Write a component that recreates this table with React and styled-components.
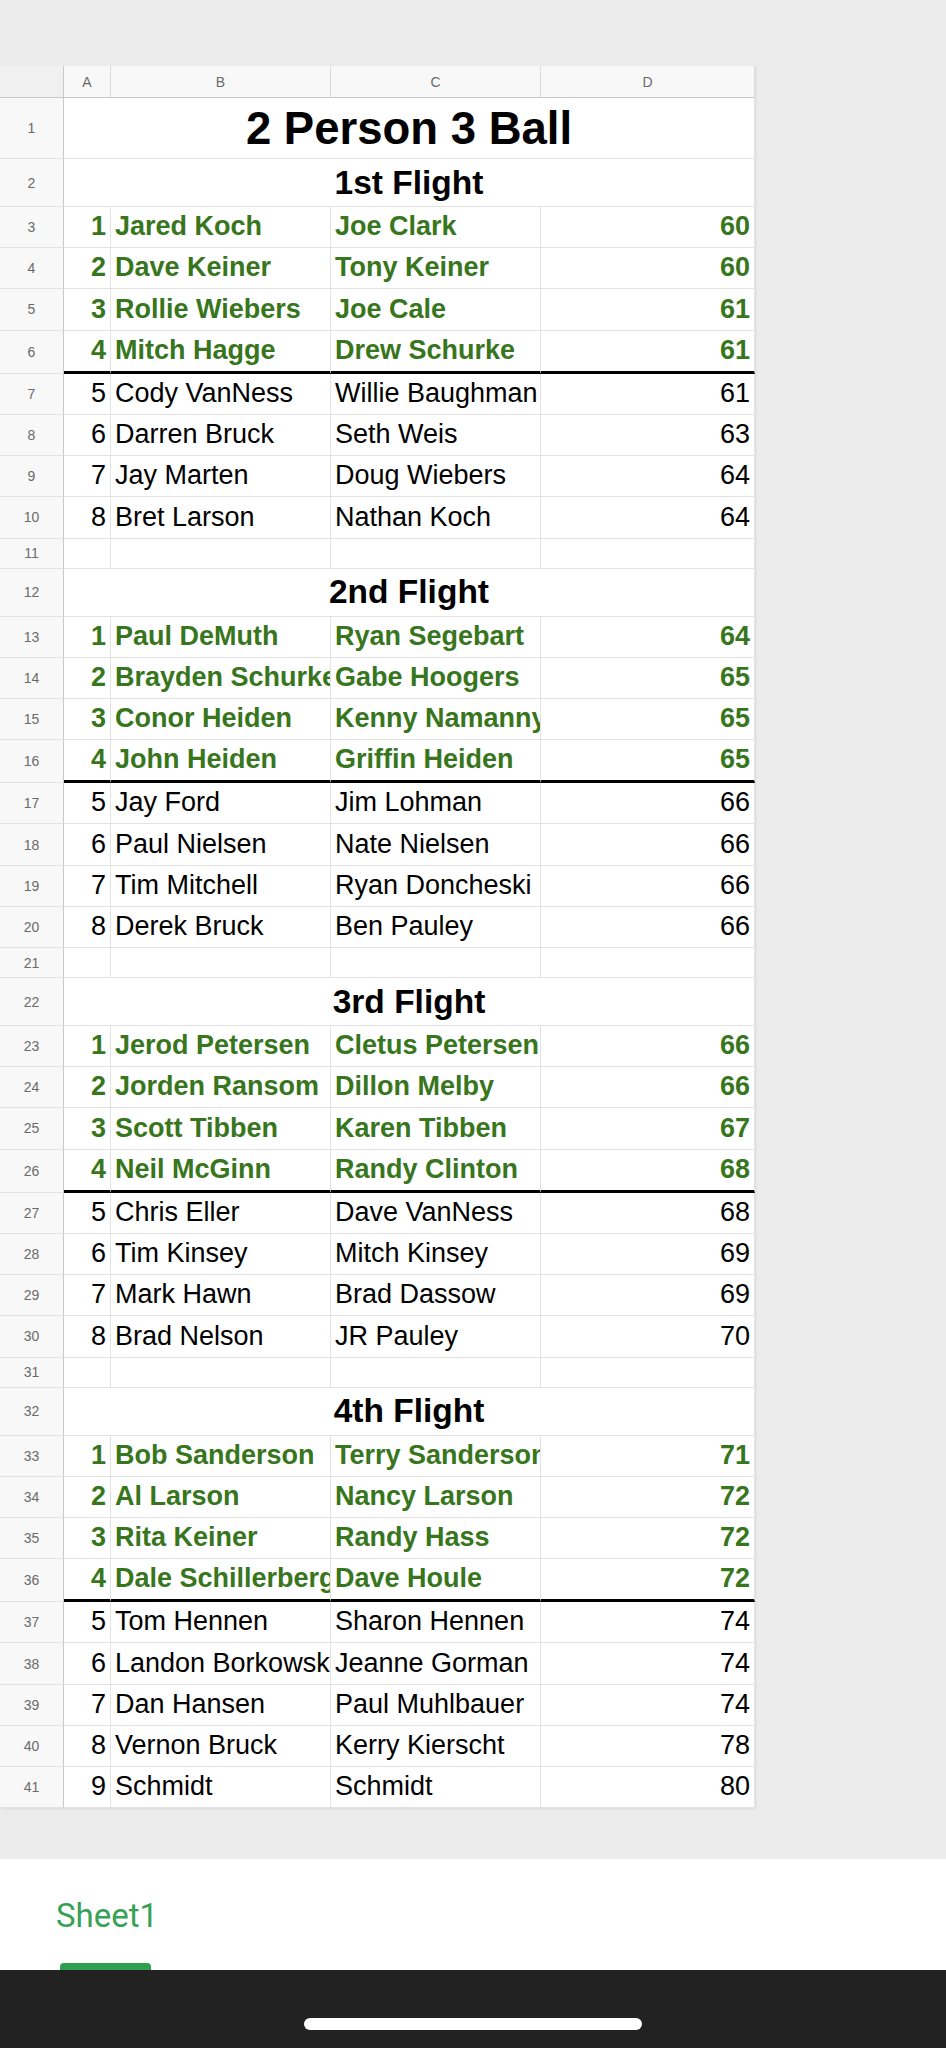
import React from "react";
import styled, { createGlobalStyle } from "styled-components";

const ROW_H = 41.2;
const COLS = "64px 47px 220px 210px 214px";
const GRID = "#e2e2e2";
const HEAD_LINE = "#c9c9c9";
const WIN = "#38761d";

const GlobalStyle = createGlobalStyle`
  html, body { margin: 0; padding: 0; }
  body {
    background: #ececec;
    font-family: "Liberation Sans", Arial, sans-serif;
  }
  * { box-sizing: border-box; }
`;

const Page = styled.div`
  width: 946px;
  height: 2048px;
  display: flex;
  flex-direction: column;
  overflow: hidden;
`;

const TopGap = styled.div`
  height: 66px;
  flex: none;
`;

const Sheet = styled.div`
  width: 755px;
  background: #fff;
  box-shadow: 1px 1px 2px rgba(0, 0, 0, 0.08);
  flex: none;
`;

const GridRow = styled.div`
  display: grid;
  grid-template-columns: ${COLS};
  height: ${(p) => p.$h}px;
`;

const Corner = styled.div`
  background: #f0f0f0;
  border-right: 1px solid ${HEAD_LINE};
  border-bottom: 1px solid ${HEAD_LINE};
`;

const ColHead = styled.div`
  background: #f8f8f8;
  border-right: 1px solid #dcdcdc;
  border-bottom: 1px solid ${HEAD_LINE};
  display: flex;
  align-items: center;
  justify-content: center;
  font-size: 14px;
  color: #6a6a6a;
`;

const RowNum = styled.div`
  background: #f8f8f8;
  border-right: 1px solid ${HEAD_LINE};
  border-bottom: 1px solid ${GRID};
  display: flex;
  align-items: center;
  justify-content: center;
  font-size: 14px;
  color: #6a6a6a;
`;

const Cell = styled.div`
  border-right: 1px solid ${GRID};
  border-bottom: ${(p) => (p.$thick ? "3px solid #000" : `1px solid ${GRID}`)};
  display: flex;
  align-items: flex-end;
  justify-content: ${(p) => (p.$right ? "flex-end" : "flex-start")};
  padding: 0 4px 7px 4px;
  overflow: hidden;
  white-space: nowrap;
  font-size: 27px;
  line-height: 1;
  font-weight: ${(p) => (p.$win ? 700 : 400)};
  color: ${(p) => (p.$win ? WIN : "#000")};
`;

const Merged = styled.div`
  grid-column: span 4;
  border-right: 1px solid ${GRID};
  border-bottom: 1px solid ${GRID};
  display: flex;
  align-items: flex-end;
  justify-content: center;
  padding-bottom: ${(p) => p.$pb}px;
  font-size: ${(p) => p.$size}px;
  line-height: 1;
  font-weight: 700;
  color: #000;
  white-space: nowrap;
`;

const BottomGap = styled.div`
  flex: 1;
`;

const TabBar = styled.div`
  height: 111px;
  flex: none;
  background: #fff;
  display: flex;
  flex-direction: column;
  align-items: flex-start;
  padding: 40px 0 0 56px;
`;

const TabLabel = styled.div`
  font-family: Roboto, "Noto Sans", sans-serif;
  font-size: 33px;
  line-height: 1;
  color: #37a257;
`;

const TabIndicator = styled.div`
  margin-top: 31px;
  margin-left: 4px;
  width: 91px;
  height: 7px;
  background: #2f9e4f;
  border-radius: 4px 4px 0 0;
`;

const HomeBar = styled.div`
  height: 78px;
  flex: none;
  background: #222222;
  display: flex;
  justify-content: center;
  padding-top: 48px;
`;

const HomePill = styled.div`
  width: 338px;
  height: 12px;
  border-radius: 6px;
  background: #fff;
`;

const flights = [
  {
    title: "1st Flight",
    rows: [
      [1, "Jared Koch", "Joe Clark", 60],
      [2, "Dave Keiner", "Tony Keiner", 60],
      [3, "Rollie Wiebers", "Joe Cale", 61],
      [4, "Mitch Hagge", "Drew Schurke", 61],
      [5, "Cody VanNess", "Willie Baughman", 61],
      [6, "Darren Bruck", "Seth Weis", 63],
      [7, "Jay Marten", "Doug Wiebers", 64],
      [8, "Bret Larson", "Nathan Koch", 64],
    ],
  },
  {
    title: "2nd Flight",
    rows: [
      [1, "Paul DeMuth", "Ryan Segebart", 64],
      [2, "Brayden Schurke", "Gabe Hoogers", 65],
      [3, "Conor Heiden", "Kenny Namanny", 65],
      [4, "John Heiden", "Griffin Heiden", 65],
      [5, "Jay Ford", "Jim Lohman", 66],
      [6, "Paul Nielsen", "Nate Nielsen", 66],
      [7, "Tim Mitchell", "Ryan Doncheski", 66],
      [8, "Derek Bruck", "Ben Pauley", 66],
    ],
  },
  {
    title: "3rd Flight",
    rows: [
      [1, "Jerod Petersen", "Cletus Petersen", 66],
      [2, "Jorden Ransom", "Dillon Melby", 66],
      [3, "Scott Tibben", "Karen Tibben", 67],
      [4, "Neil McGinn", "Randy Clinton", 68],
      [5, "Chris Eller", "Dave VanNess", 68],
      [6, "Tim Kinsey", "Mitch Kinsey", 69],
      [7, "Mark Hawn", "Brad Dassow", 69],
      [8, "Brad Nelson", "JR Pauley", 70],
    ],
  },
  {
    title: "4th Flight",
    rows: [
      [1, "Bob Sanderson", "Terry Sanderson", 71],
      [2, "Al Larson", "Nancy Larson", 72],
      [3, "Rita Keiner", "Randy Hass", 72],
      [4, "Dale Schillerberg", "Dave Houle", 72],
      [5, "Tom Hennen", "Sharon Hennen", 74],
      [6, "Landon Borkowski", "Jeanne Gorman", 74],
      [7, "Dan Hansen", "Paul Muhlbauer", 74],
      [8, "Vernon Bruck", "Kerry Kierscht", 78],
      [9, "Schmidt", "Schmidt", 80],
    ],
  },
];

function buildRows() {
  const out = [];
  let n = 1;
  out.push({ type: "merged", n: n++, text: "2 Person 3 Ball", size: 45.5, h: 61, pb: 7 });
  flights.forEach((f, fi) => {
    if (fi > 0) out.push({ type: "empty", n: n++, h: 30 });
    out.push({ type: "merged", n: n++, text: f.title, size: 33.5, h: 48, pb: 7 });
    f.rows.forEach((r) => {
      const win = r[0] <= 4;
      const thick = r[0] === 4;
      out.push({ type: "data", n: n++, data: r, win, thick, h: thick ? ROW_H + 2 : ROW_H });
    });
  });
  return out;
}

export default function App() {
  const rows = buildRows();
  return (
    <>
      <GlobalStyle />
      <Page>
        <TopGap />
        <Sheet>
          <GridRow $h={32}>
            <Corner />
            <ColHead>A</ColHead>
            <ColHead>B</ColHead>
            <ColHead>C</ColHead>
            <ColHead>D</ColHead>
          </GridRow>
          {rows.map((r) => (
            <GridRow key={r.n} $h={r.h}>
              <RowNum>{r.n}</RowNum>
              {r.type === "merged" && (
                <Merged $size={r.size} $pb={r.pb}>
                  {r.text}
                </Merged>
              )}
              {r.type === "empty" && (
                <>
                  <Cell />
                  <Cell />
                  <Cell />
                  <Cell />
                </>
              )}
              {r.type === "data" && (
                <>
                  <Cell $right $win={r.win} $thick={r.thick}>
                    {r.data[0]}
                  </Cell>
                  <Cell $win={r.win} $thick={r.thick}>
                    {r.data[1]}
                  </Cell>
                  <Cell $win={r.win} $thick={r.thick}>
                    {r.data[2]}
                  </Cell>
                  <Cell $right $win={r.win} $thick={r.thick}>
                    {r.data[3]}
                  </Cell>
                </>
              )}
            </GridRow>
          ))}
        </Sheet>
        <BottomGap />
        <TabBar>
          <TabLabel>Sheet1</TabLabel>
          <TabIndicator />
        </TabBar>
        <HomeBar>
          <HomePill />
        </HomeBar>
      </Page>
    </>
  );
}
